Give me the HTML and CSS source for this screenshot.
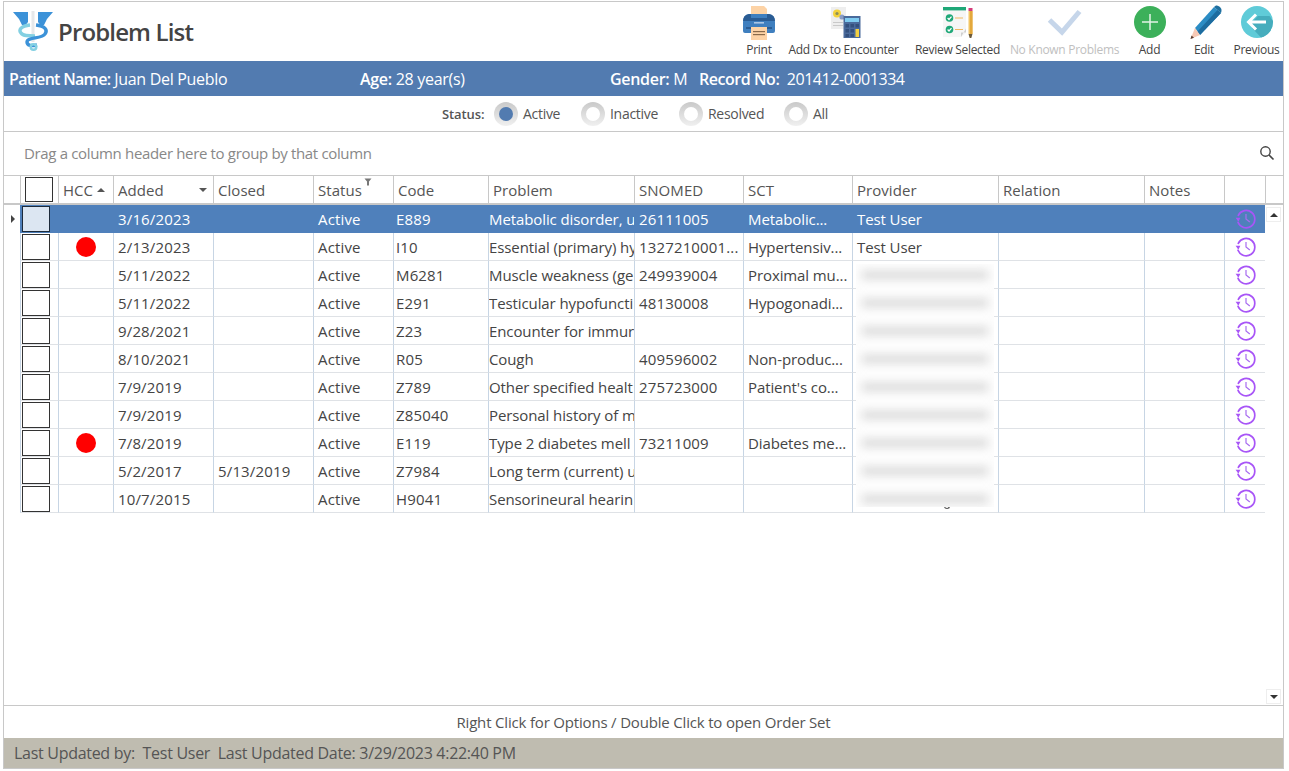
FILE: index.html
```html
<!DOCTYPE html>
<html lang="en">
<head>
<meta charset="utf-8">
<title>Problem List</title>
<link rel="stylesheet" href="styles.css">
</head>
<body>
<svg class="defs" width="0" height="0" aria-hidden="true">
  <symbol id="history" viewBox="0 0 22 22">
    <path d="M3.300 7.300A8.700 8.700 0 1 1 3 14.300" fill="none" stroke="#a855f7" stroke-width="1.700" stroke-linecap="round"/>
    <path d="M0.600 9.800L5.400 9.800L3.400 13.800Z" fill="#a855f7"/>
    <path d="M11 6V11L14.800 14" fill="none" stroke="#a86cf0" stroke-width="1.200"/>
  </symbol>
</svg>
<div class="app">
  <header class="top">
    <div class="brand">
      <svg class="logo" viewBox="0 0 40 40" aria-hidden="true">
        <path d="M0 1H15V11L12 15L9 14L6 8Z" fill="#3c92d8"/>
        <path d="M40 1H25V11L28 15L31 14L34 8Z" fill="#3c92d8"/>
        <rect x="18.500" y="0" width="3" height="31" fill="#e6e8ea"/>
        <path d="M17 14C8 15 5 19 8 22C10 25 16 25 22 25" fill="none" stroke="#83d0e2" stroke-width="3.400"/>
        <path d="M23 14C32 15 35 19 32 23C29 28 14 26 14 31C14 35 19 35 24 34" fill="none" stroke="#3c92d8" stroke-width="3.400"/>
        <circle cx="20.500" cy="36" r="2.800" fill="none" stroke="#83d0e2" stroke-width="2.400"/>
      </svg>
      <h1 class="title">Problem List</h1>
    </div>
    <nav class="tools">
      <div class="tool tool-print">
        <svg class="tool-icon" viewBox="0 0 36 36" aria-hidden="true">
          <path d="M10 2H23L26 5V16H10Z" fill="#fdd3a6"/>
          <path d="M2 18Q2 11 8 10H28Q34 11 34 18V27Q34 29 32 29H4Q2 29 2 27Z" fill="#3f7fbf"/>
          <path d="M2 17Q2 11 8 10H10V14H26V10H28Q34 11 34 17Z" fill="#2a5c94"/>
          <rect x="13" y="18" width="10" height="1.600" fill="#a9c6e6"/>
          <rect x="5" y="23" width="26" height="2" fill="#2a5c94"/>
          <rect x="10" y="23" width="16" height="13" fill="#fdd3a6"/>
          <rect x="12" y="27" width="12" height="1.200" fill="#8a6a4a"/>
          <rect x="12" y="30" width="12" height="1.200" fill="#8a6a4a"/>
        </svg>
        <span class="tool-label">Print</span>
      </div>
      <div class="tool tool-dx">
        <svg class="tool-icon" viewBox="0 0 36 36" aria-hidden="true">
          <rect x="5" y="3" width="15" height="22" fill="#eeeeee"/>
          <circle cx="11" cy="9.500" r="4" fill="#f2d23c"/>
          <circle cx="11" cy="9.500" r="1.600" fill="#8b8f5a"/>
          <circle cx="16" cy="13" r="2.600" fill="#8a9cc4"/>
          <rect x="7" y="18" width="10" height="1" fill="#c9c9c9"/>
          <rect x="7" y="21" width="10" height="1" fill="#c9c9c9"/>
          <rect x="17.500" y="12" width="17" height="22" fill="#4a6a9b"/>
          <rect x="19" y="14" width="14" height="4" fill="#7ecbf0"/>
          <path d="M19.500 20H23V23.500H19.500ZM24.500 20H28V23.500H24.500ZM29.500 20H33V23.500H29.500ZM19.500 25H23V28.500H19.500ZM24.500 25H28V28.500H24.500ZM19.500 30H23V33H19.500ZM24.500 30H28V33H24.500Z" fill="#33507e"/>
          <rect x="29.500" y="25" width="3.500" height="8" fill="#f3d040"/>
        </svg>
        <span class="tool-label">Add Dx to Encounter</span>
      </div>
      <div class="tool tool-review">
        <svg class="tool-icon" viewBox="0 0 36 36" aria-hidden="true">
          <path d="M3 5H26V29L21 33H3Z" fill="#f6f6f6"/>
          <rect x="3" y="3" width="23" height="3.400" fill="#1fa878"/>
          <path d="M21 33V28.500H26V24.500Z" fill="#cfcfcf"/>
          <circle cx="9.500" cy="14" r="3.800" fill="#1fa878"/>
          <circle cx="9.500" cy="25.500" r="3.800" fill="#1fa878"/>
          <path d="M7.600 14L9 15.500L11.500 12.600M7.600 25.500L9 27L11.500 24.100" fill="none" stroke="#fff" stroke-width="1.200"/>
          <rect x="15" y="13.500" width="8" height="1" fill="#f0b860"/>
          <rect x="15" y="25" width="8" height="1" fill="#f0b860"/>
          <rect x="28.500" y="4" width="4" height="3" fill="#d63b7a"/>
          <rect x="28.500" y="7" width="4" height="23" fill="#f2c462"/>
          <rect x="30" y="7" width="2.500" height="23" fill="#e3a83c"/>
          <path d="M28.500 30H32.500L31.300 34H29.700Z" fill="#6c5a3a"/>
        </svg>
        <span class="tool-label">Review Selected</span>
      </div>
      <div class="tool tool-nkp">
        <svg class="tool-icon" viewBox="0 0 36 36" aria-hidden="true">
          <path d="M2.500 16L15 28L32.500 7.500" fill="none" stroke="#c6d6ea" stroke-width="5"/>
        </svg>
        <span class="tool-label tool-label-off">No Known Problems</span>
      </div>
      <div class="tool tool-add">
        <svg class="tool-icon" viewBox="0 0 36 36" aria-hidden="true">
          <circle cx="18" cy="18" r="16" fill="#3cb05a"/>
          <path d="M18 10V26M10 18H26" stroke="#ffffff" stroke-width="1.500" opacity=".85"/>
        </svg>
        <span class="tool-label">Add</span>
      </div>
      <div class="tool tool-edit">
        <svg class="tool-icon" viewBox="0 0 36 36" aria-hidden="true">
          <path d="M9 24L28 3L35 9L14 31Z" fill="#2b8cc4"/>
          <path d="M11.500 27.500L31.500 6L35 9L14 31Z" fill="#1d6c9f"/>
          <path d="M28 3L30 1.500Q32 1 34 3Q36 5 35.500 7L35 9Z" fill="#1f6f9f"/>
          <path d="M9 24L14 31L4.500 35Z" fill="#f7c9b5"/>
          <path d="M4.500 35L5.500 31.500L8 33.800Z" fill="#5a3b30"/>
        </svg>
        <span class="tool-label">Edit</span>
      </div>
      <div class="tool tool-prev">
        <svg class="tool-icon" viewBox="0 0 36 36" aria-hidden="true">
          <circle cx="18" cy="18" r="16" fill="#5fcbd8"/>
          <path d="M13 18L19 12H30.500L34 17A16 16 0 0 1 22 33.500L13 24Z" fill="#46adbd"/>
          <path d="M17 10.500L9.500 18L17 25.500M10 18H27" fill="none" stroke="#ffffff" stroke-width="3"/>
        </svg>
        <span class="tool-label">Previous</span>
      </div>
    </nav>
  </header>

  <section class="patient">
    <span class="pf pf-name"><b>Patient Name:</b> Juan Del Pueblo</span>
    <span class="pf pf-age"><b>Age:</b> 28 year(s)</span>
    <span class="pf pf-gender"><b>Gender:</b> M</span>
    <span class="pf pf-rec"><b>Record No:</b>&nbsp; 201412-0001334</span>
  </section>

  <section class="filter">
    <b class="filter-title">Status:</b>
    <span class="radio radio-on"></span><span class="radio-text rt-active">Active</span>
    <span class="radio"></span><span class="radio-text rt-inactive">Inactive</span>
    <span class="radio"></span><span class="radio-text rt-resolved">Resolved</span>
    <span class="radio"></span><span class="radio-text">All</span>
  </section>

  <section class="grid">
    <div class="group">
      <span>Drag a column header here to group by that column</span>
      <svg class="search" viewBox="0 0 16 16" aria-hidden="true">
        <circle cx="6.500" cy="6.500" r="4.700" fill="none" stroke="#444" stroke-width="1.400"/>
        <path d="M10 10L14.500 14.500" stroke="#444" stroke-width="1.600"/>
      </svg>
    </div>

    <div class="row-head">
      <div class="hc hc-first"></div>
      <div class="hc hc-box"><span class="box box-head"></span></div>
      <div class="hc">HCC<i class="sort-up"></i></div>
      <div class="hc">Added<i class="sort-down"></i></div>
      <div class="hc">Closed</div>
      <div class="hc">Status<svg class="funnel" viewBox="0 0 8 8" aria-hidden="true"><path d="M0.500 0.500H7.500L5 3.500V7.500H3V3.500Z" fill="#777"/></svg></div>
      <div class="hc">Code</div>
      <div class="hc">Problem</div>
      <div class="hc">SNOMED</div>
      <div class="hc">SCT</div>
      <div class="hc">Provider</div>
      <div class="hc">Relation</div>
      <div class="hc">Notes</div>
      <div class="hc"></div>
      <div class="hc"></div>
    </div>

    <div class="body">
      <div class="rows">
        <div class="row row-sel">
          <div class="c c-ind"><i class="arrow"></i></div>
          <div class="c c-box"><span class="box box-sel"></span></div>
          <div class="c"></div>
          <div class="c">3/16/2023</div><div class="c"></div><div class="c">Active</div><div class="c c-code">E889</div>
          <div class="c c-prob">Metabolic disorder, u</div><div class="c">26111005</div><div class="c c-sct">Metabolic...</div><div class="c c-sct">Test User</div><div class="c"></div><div class="c"></div>
          <div class="c c-hist"><svg class="hist"><use href="#history"/></svg></div>
        </div>
        <div class="row">
          <div class="c c-ind"></div><div class="c c-box"><span class="box"></span></div>
          <div class="c c-hcc"><i class="dot"></i></div>
          <div class="c">2/13/2023</div><div class="c"></div><div class="c">Active</div><div class="c c-code">I10</div>
          <div class="c c-prob">Essential (primary) hy</div><div class="c">1327210001...</div><div class="c c-sct">Hypertensiv...</div><div class="c c-sct">Test User</div><div class="c"></div><div class="c"></div>
          <div class="c c-hist"><svg class="hist"><use href="#history"/></svg></div>
        </div>
        <div class="row">
          <div class="c c-ind"></div><div class="c c-box"><span class="box"></span></div><div class="c"></div>
          <div class="c">5/11/2022</div><div class="c"></div><div class="c">Active</div><div class="c c-code">M6281</div>
          <div class="c c-prob">Muscle weakness (ge</div><div class="c">249939004</div><div class="c c-sct">Proximal mu...</div><div class="c"></div><div class="c"></div><div class="c"></div>
          <div class="c c-hist"><svg class="hist"><use href="#history"/></svg></div>
        </div>
        <div class="row">
          <div class="c c-ind"></div><div class="c c-box"><span class="box"></span></div><div class="c"></div>
          <div class="c">5/11/2022</div><div class="c"></div><div class="c">Active</div><div class="c c-code">E291</div>
          <div class="c c-prob">Testicular hypofuncti</div><div class="c">48130008</div><div class="c c-sct">Hypogonadi...</div><div class="c"></div><div class="c"></div><div class="c"></div>
          <div class="c c-hist"><svg class="hist"><use href="#history"/></svg></div>
        </div>
        <div class="row">
          <div class="c c-ind"></div><div class="c c-box"><span class="box"></span></div><div class="c"></div>
          <div class="c">9/28/2021</div><div class="c"></div><div class="c">Active</div><div class="c c-code">Z23</div>
          <div class="c c-prob">Encounter for immur</div><div class="c"></div><div class="c"></div><div class="c"></div><div class="c"></div><div class="c"></div>
          <div class="c c-hist"><svg class="hist"><use href="#history"/></svg></div>
        </div>
        <div class="row">
          <div class="c c-ind"></div><div class="c c-box"><span class="box"></span></div><div class="c"></div>
          <div class="c">8/10/2021</div><div class="c"></div><div class="c">Active</div><div class="c c-code">R05</div>
          <div class="c c-prob">Cough</div><div class="c">409596002</div><div class="c c-sct">Non-produc...</div><div class="c"></div><div class="c"></div><div class="c"></div>
          <div class="c c-hist"><svg class="hist"><use href="#history"/></svg></div>
        </div>
        <div class="row">
          <div class="c c-ind"></div><div class="c c-box"><span class="box"></span></div><div class="c"></div>
          <div class="c">7/9/2019</div><div class="c"></div><div class="c">Active</div><div class="c c-code">Z789</div>
          <div class="c c-prob">Other specified healt</div><div class="c">275723000</div><div class="c c-sct">Patient's co...</div><div class="c"></div><div class="c"></div><div class="c"></div>
          <div class="c c-hist"><svg class="hist"><use href="#history"/></svg></div>
        </div>
        <div class="row">
          <div class="c c-ind"></div><div class="c c-box"><span class="box"></span></div><div class="c"></div>
          <div class="c">7/9/2019</div><div class="c"></div><div class="c">Active</div><div class="c c-code">Z85040</div>
          <div class="c c-prob">Personal history of m</div><div class="c"></div><div class="c"></div><div class="c"></div><div class="c"></div><div class="c"></div>
          <div class="c c-hist"><svg class="hist"><use href="#history"/></svg></div>
        </div>
        <div class="row">
          <div class="c c-ind"></div><div class="c c-box"><span class="box"></span></div>
          <div class="c c-hcc"><i class="dot"></i></div>
          <div class="c">7/8/2019</div><div class="c"></div><div class="c">Active</div><div class="c c-code">E119</div>
          <div class="c c-prob">Type 2 diabetes mell</div><div class="c">73211009</div><div class="c c-sct">Diabetes me...</div><div class="c"></div><div class="c"></div><div class="c"></div>
          <div class="c c-hist"><svg class="hist"><use href="#history"/></svg></div>
        </div>
        <div class="row">
          <div class="c c-ind"></div><div class="c c-box"><span class="box"></span></div><div class="c"></div>
          <div class="c">5/2/2017</div><div class="c">5/13/2019</div><div class="c">Active</div><div class="c c-code">Z7984</div>
          <div class="c c-prob">Long term (current) u</div><div class="c"></div><div class="c"></div><div class="c"></div><div class="c"></div><div class="c"></div>
          <div class="c c-hist"><svg class="hist"><use href="#history"/></svg></div>
        </div>
        <div class="row">
          <div class="c c-ind"></div><div class="c c-box"><span class="box"></span></div><div class="c"></div>
          <div class="c">10/7/2015</div><div class="c"></div><div class="c">Active</div><div class="c c-code">H9041</div>
          <div class="c c-prob">Sensorineural hearin</div><div class="c"></div><div class="c"></div><div class="c"></div><div class="c"></div><div class="c"></div>
          <div class="c c-hist"><svg class="hist"><use href="#history"/></svg></div>
        </div>
        <i class="tail" aria-hidden="true"></i>
        <div class="redact" aria-hidden="true">
          <i></i><i></i><i></i><i></i><i></i><i></i><i></i><i></i><i></i>
        </div>
      </div>
      <div class="scroll">
        <span class="sbtn"><i class="tri-up"></i></span>
        <span class="sbtn"><i class="tri-down"></i></span>
      </div>
    </div>
  </section>

  <div class="hint">Right Click for Options / Double Click to open Order Set</div>
  <footer class="status">Last Updated by:&nbsp; Test User&nbsp; Last Updated Date: 3/29/2023 4:22:40 PM</footer>
</div>
</body>
</html>
```

FILE: styles.css
```css
* { box-sizing: border-box; }
html, body { margin: 0; padding: 0; background: #fff; }
body {
  font-family: "Open Sans", "Noto Sans", sans-serif;
  font-size: 14px;
  color: #444;
  overflow: hidden;
}
.defs { position: absolute; }
.app {
  margin: 1px 0 0 3px;
  width: 1281px;
  height: 768px;
  border: 1px solid #c8c8c8;
  display: flex;
  flex-direction: column;
}
.top { height: 59px; display: flex; justify-content: space-between; flex: none; }
.brand { display: flex; align-items: flex-start; padding: 9px 0 0 9px; }
.logo { width: 40px; height: 40px; }
.title { margin: 6px 0 0 5px; font-size: 24px; line-height: 30px; font-weight: 600; color: #444; letter-spacing: -0.85px; }
.tools { display: flex; padding-top: 2px; }
.tool { display: flex; flex-direction: column; align-items: center; }
.tool-icon { width: 36px; height: 36px; display: block; }
.tool-label { font-size: 12px; line-height: 16px; margin-top: 2px; white-space: nowrap; letter-spacing: -0.3px; color: #444; }
.tool-label-off { color: #c0c0c0; }
.tool-print { width: 50px; }
.tool-dx { width: 119px; }
.tool-review { width: 109px; }
.tool-nkp { width: 105px; }
.tool-add { width: 65px; }
.tool-edit { width: 44px; margin-right: 4px; }
.tool-prev { width: 53px; }

.patient {
  height: 35px; flex: none;
  background: #527bb0; color: #fff;
  display: flex; align-items: center;
  padding-left: 5px;
  font-size: 16px;
  letter-spacing: -0.3px;
}
.patient b { font-weight: 600; }
.pf-name { width: 351px; }
.pf-name b { letter-spacing: -0.7px; }
.pf-age { width: 250px; }
.pf-gender { width: 89px; }
.pf-rec { letter-spacing: -0.45px; }

.filter {
  height: 35px; flex: none;
  display: flex; align-items: center;
  padding-left: 438px;
  font-size: 14px;
  letter-spacing: -0.3px;
}
.filter-title { font-weight: 600; color: #555; width: 52px; font-size: 13px; letter-spacing: -0.1px; }
.radio {
  width: 24px; height: 24px; border-radius: 50%;
  background: linear-gradient(#c9c9c9, #f0f0f0);
  display: flex; align-items: center; justify-content: center;
}
.radio::after { content: ""; width: 14px; height: 14px; border-radius: 50%; background: #fff; }
.radio-on::after { background: #527bb0; }
.radio-text { margin-left: 5px; color: #555; }
.rt-active { width: 58px; }
.rt-inactive { width: 69px; }
.rt-resolved { width: 76px; }

.grid {
  flex: 1; min-height: 0;
  border-top: 1px solid #c8c8c8;
  border-bottom: 1px solid #c8c8c8;
  display: flex; flex-direction: column;
}
.group {
  height: 43px; flex: none;
  display: flex; align-items: center; justify-content: space-between;
  padding: 0 8px 2px 20px;
  color: #888;
  font-size: 15px;
  letter-spacing: -0.34px;
}
.search { width: 16px; height: 16px; }

.row-head, .row {
  display: grid;
  grid-template-columns: 16px 38px 55px 100px 100px 80px 95px 146px 109px 109px 146px 146px 80px 41px;
}
.row-head {
  grid-template-columns: 16px 38px 55px 100px 100px 80px 95px 146px 109px 109px 146px 146px 80px 41px 1fr;
  height: 30px; flex: none;
  border-top: 1px solid #c8c8c8;
  border-bottom: 2px solid #c8c8c8;
  font-size: 15px;
  letter-spacing: 0.05px;
  color: #555;
}
.hc {
  position: relative;
  border-left: 1px solid #c8c8c8;
  padding-left: 4px;
  display: flex; align-items: center;
  white-space: nowrap;
}
.hc-first { border-left: 0; }
.hc-box { padding-left: 0; }
.sort-up, .sort-down, .tri-up, .tri-down { display: block; width: 0; height: 0; border-left: 4px solid transparent; border-right: 4px solid transparent; }
.sort-up { border-bottom: 4px solid #555; margin-left: 4px; }
.sort-down { border-top: 4px solid #555; position: absolute; right: 6px; top: 12px; }
.funnel { position: absolute; left: 50px; top: 2px; width: 8px; height: 8px; }

.body { flex: 1; min-height: 0; display: flex; }
.rows { width: 1261px; position: relative; }
.row {
  height: 28px;
  font-size: 15px;
  letter-spacing: 0.15px;
  color: #444;
}
.c {
  border-left: 1px solid #c7d5e4;
  border-bottom: 1px solid #dfe2e6;
  padding-left: 4px;
  overflow: hidden;
  white-space: nowrap;
  line-height: 28px;
  min-width: 0;
}
.c-ind { border: 0; padding: 0; display: flex; align-items: center; justify-content: center; }
.c-box { padding: 0 0 0 1px; display: flex; align-items: center; }
.c-code { padding-left: 2px; }
.c-prob { padding-left: 0; letter-spacing: -0.1px; }
.c-sct { letter-spacing: -0.1px; }
.c-hcc { display: flex; align-items: center; justify-content: center; padding: 0; }
.c-hist { display: flex; align-items: center; justify-content: center; padding: 0 0 0 1px; }
.row-sel { color: #fff; }
.row-sel .c { background: #4f80bb; border-color: #4f80bb; }
.row-sel .c-ind { background: #fff; }
.box { display: block; width: 28px; height: 26px; border: 1px solid #333; background: #fff; }
.box-head { width: 28px; height: 25px; margin-left: 4px; }
.box-sel { background: #dce6f2; border-color: #1c2a3a; }
.arrow { display: block; width: 0; height: 0; border-top: 4px solid transparent; border-bottom: 4px solid transparent; border-left: 4px solid #444; margin-left: 1px; }
.dot { display: block; width: 20px; height: 20px; border-radius: 50%; background: #f00; }
.hist { width: 22px; height: 22px; display: block; }

.redact {
  position: absolute;
  left: 852px; top: 59px;
  width: 138px; height: 243px;
  background: #fdfdfd;
  overflow: hidden;
  display: flex; flex-direction: column;
  padding: 7px 6px 0;
  gap: 20px;
}
.redact i {
  display: block;
  height: 8px;
  flex: none;
  background: #d8d8d8;
  filter: blur(5px);
}
.tail {
  position: absolute;
  left: 940px; top: 301px;
  width: 6px; height: 3px;
  border: 1px solid #555;
  border-top: 0;
  border-radius: 0 0 3px 3px;
}

.scroll { flex: 1; display: flex; flex-direction: column; justify-content: space-between; padding: 2px 2px 1px 1px; }
.sbtn { height: 15px; border: 1px solid #eee; display: flex; align-items: center; justify-content: center; }
.tri-up { border-bottom: 4px solid #333; }
.tri-down { border-top: 4px solid #333; }

.hint { height: 32px; flex: none; display: flex; align-items: center; justify-content: center; font-size: 15px; letter-spacing: -0.18px; color: #555; }
.status { height: 30px; flex: none; background: #bfbcb0; display: flex; align-items: center; padding-left: 10px; font-size: 16px; letter-spacing: -0.29px; color: #555; }
```
